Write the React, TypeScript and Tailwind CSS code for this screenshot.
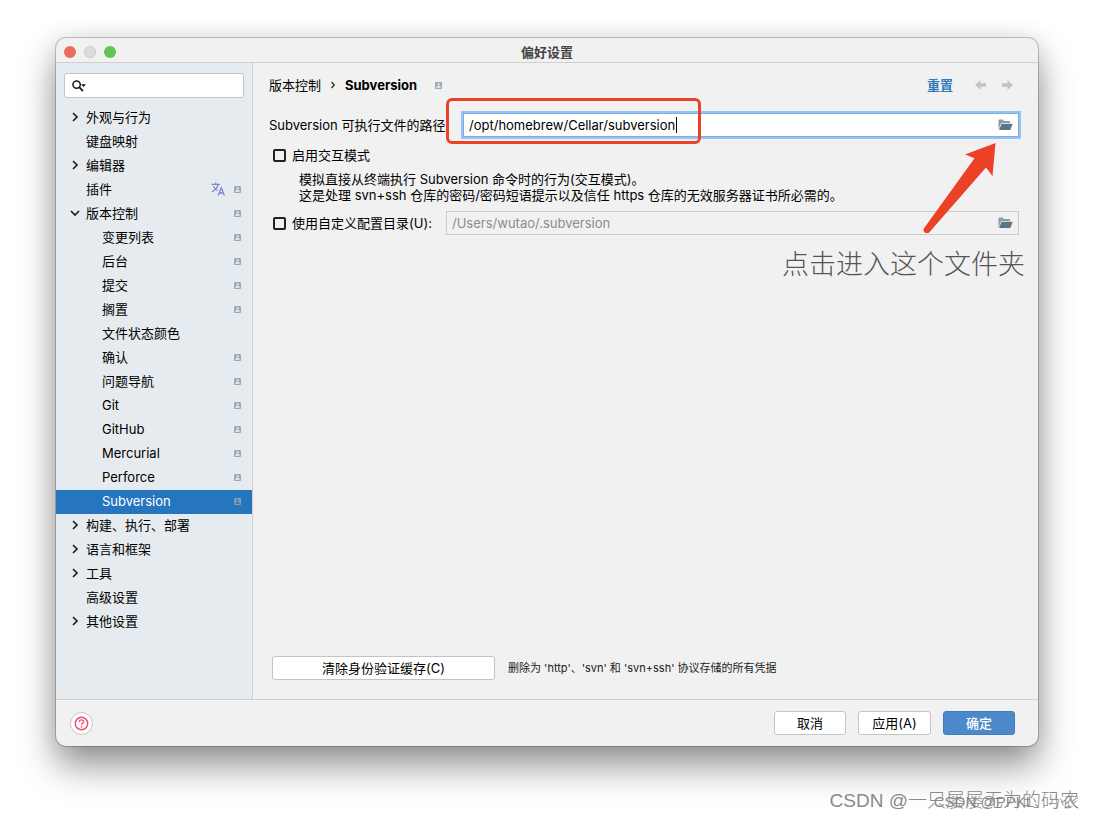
import React from "react";
import clsx from "clsx";

type TreeItem = {
  label: string;
  level?: number;
  state?: "open" | "closed";
  project?: boolean;
  translate?: boolean;
  selected?: boolean;
};

const items: TreeItem[] = [
  { label: "外观与行为", state: "closed" },
  { label: "键盘映射" },
  { label: "编辑器", state: "closed" },
  { label: "插件", project: true, translate: true },
  { label: "版本控制", state: "open", project: true },
  { label: "变更列表", level: 1, project: true },
  { label: "后台", level: 1, project: true },
  { label: "提交", level: 1, project: true },
  { label: "搁置", level: 1, project: true },
  { label: "文件状态颜色", level: 1 },
  { label: "确认", level: 1, project: true },
  { label: "问题导航", level: 1, project: true },
  { label: "Git", level: 1, project: true },
  { label: "GitHub", level: 1, project: true },
  { label: "Mercurial", level: 1, project: true },
  { label: "Perforce", level: 1, project: true },
  { label: "Subversion", level: 1, project: true, selected: true },
  { label: "构建、执行、部署", state: "closed" },
  { label: "语言和框架", state: "closed" },
  { label: "工具", state: "closed" },
  { label: "高级设置" },
  { label: "其他设置", state: "closed" },
];

const ProjectIcon = ({ dim }: { dim?: boolean }) => (
  <svg width="7" height="7" viewBox="0 0 7 7" className="shrink-0">
    <rect width="7" height="7" rx="0.8" fill={dim ? "#8a9baa" : "#9aabb5"} />
    <circle cx="3.5" cy="2.3" r="1.1" fill={dim ? "#2675bf" : "#eef2f5"} />
    <path d="M1.3 5.8V5.2C1.3 4.4 2.4 4 3.5 4s2.2.4 2.2 1.2v.6z" fill={dim ? "#2675bf" : "#eef2f5"} />
  </svg>
);

const TranslateIcon = () => (
  <svg width="14" height="14" viewBox="0 0 14 14" fill="none" stroke="#7a86cf" className="shrink-0">
    <path d="M0.5 2.3H9M4.7 0.5V2.3M7.2 2.3C6.6 5.2 4.2 7.9 1 9.6M2.3 4.2C3.3 6.3 4.9 7.9 6.8 8.8" strokeWidth="1.2" />
    <path d="M7.2 13.4L10.3 5.8L13.4 13.4M8.3 11H12.3" strokeWidth="1.3" />
  </svg>
);

const Chevron = ({ open }: { open: boolean }) => (
  <svg width="10" height="10" viewBox="0 0 10 10" fill="none" stroke="#1a1a1a" strokeWidth="1.6">
    <path d={open ? "M1 3L5 7L9 3" : "M3 1L7 5L3 9"} />
  </svg>
);

const FolderIcon = () => (
  <svg width="15" height="12" viewBox="0 0 15 12">
    <path d="M0.5 10.5V1.2Q0.5 0.6 1.1 0.6H4.6L6 2H11.4Q12 2 12 2.6V4H3.2Z" fill="#8b9ca6" />
    <path d="M3.6 4.8H14.6L12.4 11H1Z" fill="#5d7684" />
  </svg>
);

const ArrowIcon = ({ flip }: { flip?: boolean }) => (
  <svg width="12" height="10" viewBox="0 0 12 10" fill="#c3c3c3" className={clsx(flip && "rotate-180")}>
    <path d="M0 5L5.5 0V3.3H11V6.7H5.5V10Z" />
  </svg>
);

const TreeRow = ({ item }: { item: TreeItem }) => (
  <li>
    <a
      href="#"
      className={clsx(
        "flex h-6 items-center pb-0.5 pr-[11px]",
        item.level ? "pl-[30px]" : "pl-[14px]",
        item.selected ? "bg-[#2675bf] text-white" : "text-black",
      )}
    >
      <span className="flex w-4 shrink-0">
        {item.state && <Chevron open={item.state === "open"} />}
      </span>
      <span className="flex-1 whitespace-nowrap">{item.label}</span>
      {item.translate && (
        <span className="mr-[9px]">
          <TranslateIcon />
        </span>
      )}
      {item.project && <ProjectIcon dim={item.selected} />}
    </a>
  </li>
);

const Sidebar = () => (
  <aside className="w-[197px] shrink-0 border-r border-[#cdd0d3] bg-[#e6ebef] pt-[10px]">
    <label className="mx-2 flex h-[25px] items-center rounded-[3px] border border-[#c4c4c4] bg-white pl-[7px]">
      <svg width="14" height="12" viewBox="0 0 14 12" fill="none" stroke="#1a1a1a">
        <circle cx="4.6" cy="4.6" r="3.7" strokeWidth="1.5" />
        <path d="M7.2 7.2L11 11.2" strokeWidth="1.8" />
        <path d="M9 4.2H14L11.5 7Z" fill="#1a1a1a" stroke="none" />
      </svg>
      <input type="text" aria-label="搜索" className="min-w-0 flex-1 px-1 outline-none" />
    </label>
    <ul className="mt-2">
      {items.map((item) => (
        <TreeRow key={item.label} item={item} />
      ))}
    </ul>
  </aside>
);

const checkboxClass =
  "ml-1 mr-[6px] size-[13px] shrink-0 appearance-none rounded-[2px] border-2 border-[#222]";

const Content = () => (
  <main className="relative flex min-w-0 flex-1 flex-col pl-4 pr-[19px]">
    <header className="flex h-11 items-center">
      <span>版本控制</span>
      <svg width="6" height="8" viewBox="0 0 6 8" fill="none" stroke="#222" strokeWidth="1.2" className="mx-[9px]">
        <path d="M1.5 1L4.3 4L1.5 7" />
      </svg>
      <h1 className="mr-[18px] font-bold">Subversion</h1>
      <ProjectIcon />
      <a href="#" className="ml-auto font-bold text-[#2f77b8]">
        重置
      </a>
      <button type="button" aria-label="后退" className="ml-[22px]">
        <ArrowIcon />
      </button>
      <button type="button" aria-label="前进" className="ml-[14px] mr-[6px]">
        <ArrowIcon flip />
      </button>
    </header>

    <div className="mt-[6px] flex h-6 items-center">
      <label htmlFor="svn-path" className="w-[194px] shrink-0 whitespace-nowrap">
        Subversion 可执行文件的路径:
      </label>
      <div className="relative flex h-6 min-w-0 flex-1 items-center border border-[#7eaee6] bg-white pr-[5px] ring-2 ring-[#97c3f3]">
        <input
          id="svn-path"
          type="text"
          defaultValue="/opt/homebrew/Cellar/subversion"
          className="min-w-0 flex-1 pl-[5px] outline-none"
        />
        <span className="absolute left-[212px] top-[3px] h-4 w-px bg-black" />
        <button type="button" aria-label="浏览可执行文件">
          <FolderIcon />
        </button>
      </div>
    </div>

    <label className="mt-[6px] flex h-6 items-center">
      <input type="checkbox" className={checkboxClass} />
      启用交互模式
    </label>
    <p className="mt-1 pl-[30px] leading-4">
      模拟直接从终端执行 Subversion 命令时的行为(交互模式)。
      <br />
      这是处理 svn+ssh 仓库的密码/密码短语提示以及信任 https 仓库的无效服务器证书所必需的。
    </p>

    <div className="mt-2 flex h-6 items-center">
      <label className="flex w-[177px] shrink-0 items-center whitespace-nowrap">
        <input type="checkbox" className={checkboxClass} />
        使用自定义配置目录(U):
      </label>
      <div className="flex h-6 min-w-0 flex-1 items-center border border-[#cbcbcb] pr-[5px]">
        <input
          type="text"
          aria-label="自定义配置目录"
          readOnly
          defaultValue="/Users/wutao/.subversion"
          className="min-w-0 flex-1 pl-[5px] text-[#8c8c8c] outline-none"
        />
        <button type="button" aria-label="浏览配置目录">
          <FolderIcon />
        </button>
      </div>
    </div>

    <div className="mb-[19px] mt-auto flex items-center gap-[13px] pl-[3px]">
      <button type="button" className="h-6 w-[223px] rounded-[3px] border border-[#c4c4c4] bg-white">
        清除身份验证缓存(C)
      </button>
      <span className="text-[11px] text-[#222]">删除为 'http'、'svn' 和 'svn+ssh' 协议存储的所有凭据</span>
    </div>

    <Annotations />
  </main>
);

// red marks drawn on top of the form
const Annotations = () => (
  <div className="pointer-events-none absolute inset-0">
    <div className="absolute left-[193px] top-[35px] h-[46px] w-[255px] rounded-md border-3 border-[#ec4027]" />
    <svg width="73" height="90" viewBox="0 0 73 90" fill="#ec4027" className="absolute right-[42px] top-20">
      <path d="M72.5 0L42 11.5L51.5 15.2L1 85.2A3.4 3.4 0 0 0 6.6 89L63 24.5L69.5 33Z" />
    </svg>
    <p className="absolute right-[13px] top-[182px] whitespace-nowrap text-[27px] font-light leading-10 text-[#555]">
      点击进入这个文件夹
    </p>
  </div>
);

const Footer = () => (
  <footer className="flex h-[47px] items-center gap-3 border-t border-[#cfcfcf] pl-[14px] pr-[23px]">
    <button
      type="button"
      aria-label="帮助"
      className="mr-auto flex size-[23px] items-center justify-center rounded-full border border-[#c4c4c4] bg-white"
    >
      <svg width="15" height="15" viewBox="0 0 15 15" fill="none" stroke="#f0506e">
        <circle cx="7.5" cy="7.5" r="6.2" strokeWidth="1.5" />
        <path d="M5.4 6C5.4 4.6 6.3 3.9 7.5 3.9S9.6 4.7 9.6 5.8C9.6 7.2 7.5 7.3 7.5 8.9" strokeWidth="1.4" />
        <path d="M7.5 10V11.4" strokeWidth="1.5" />
      </svg>
    </button>
    <button type="button" className="h-6 w-[72px] rounded-[3px] border border-[#c4c4c4] bg-white">
      取消
    </button>
    <button type="button" className="h-6 w-[73px] rounded-[3px] border border-[#c4c4c4] bg-white">
      应用(A)
    </button>
    <button
      type="button"
      className="h-6 w-[72px] rounded-[3px] border border-[#3f7dbf] bg-[#4d89c9] font-medium text-white"
    >
      确定
    </button>
  </footer>
);

const App = () => {
  return (
    <div className="relative flex min-h-screen bg-white px-14 pb-[74px] pt-[38px] font-['Inter','Noto_Sans_CJK_SC',sans-serif] text-[13px] leading-5 text-black">
      <div className="flex min-w-0 flex-1 flex-col overflow-hidden rounded-[10px] bg-[#f1f1f1] shadow-[0_0_0_1px_rgba(0,0,0,0.2),0_20px_36px_rgba(0,0,0,0.42),0_0_24px_rgba(0,0,0,0.1)]">
        <div className="flex h-[25px] items-center border-b border-[#cfcfcf] px-2 pt-[3px]">
          <div className="flex flex-1 gap-2">
            <span className="size-3 rounded-full bg-[#ed6a5e]" />
            <span className="size-3 rounded-full border border-[#c8c8c8] bg-[#dcdcdc]" />
            <span className="size-3 rounded-full bg-[#61c454]" />
          </div>
          <span className="font-semibold text-[#444]">偏好设置</span>
          <div className="flex-1" />
        </div>
        <div className="flex flex-1">
          <Sidebar />
          <Content />
        </div>
        <Footer />
      </div>

      <p className="absolute bottom-[7px] right-[15px] whitespace-nowrap text-[19px] font-light leading-6 text-[#8a8a8a] font-['Liberation_Sans','Noto_Sans_CJK_SC',sans-serif]">
        CSDN @一只屡屡无为的码农
      </p>
      <p className="absolute bottom-[6px] right-[15px] whitespace-nowrap text-[15px] font-light leading-6 text-[#8a8a8a] font-['Liberation_Sans','Noto_Sans_CJK_SC',sans-serif]">
        CSDN @PPKL、小农
      </p>
    </div>
  );
};

export default App;
